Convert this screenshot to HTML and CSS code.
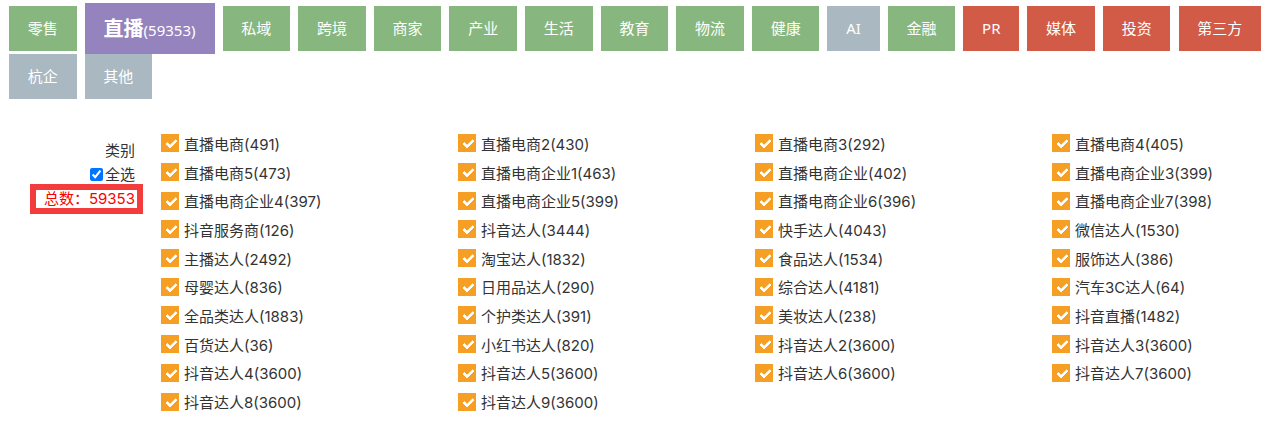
FILE: index.html
```html
<!DOCTYPE html>
<html lang="zh-CN">

<head>
    <meta charset="UTF-8">
    <meta name="viewport" content="width=device-width, initial-scale=1.0">
    <title>类别筛选</title>
    <link rel="stylesheet" href="styles.css">
</head>

<body>
    <nav class="tabs">
        <a class="tab green">零售</a>
        <a class="tab purple active"><b>直播</b>(59353)</a>
        <a class="tab green">私域</a>
        <a class="tab green">跨境</a>
        <a class="tab green">商家</a>
        <a class="tab green">产业</a>
        <a class="tab green">生活</a>
        <a class="tab green">教育</a>
        <a class="tab green">物流</a>
        <a class="tab green">健康</a>
        <a class="tab grey">AI</a>
        <a class="tab green">金融</a>
        <a class="tab red">PR</a>
        <a class="tab red">媒体</a>
        <a class="tab red">投资</a>
        <a class="tab red">第三方</a>
        <a class="tab grey">杭企</a>
        <a class="tab grey">其他</a>
    </nav>

    <main class="filter">
        <div class="filter-label">
            <div>类别</div>
            <label class="check-all"><input type="checkbox" checked>全选</label>
            <div><span class="total">总数：59353</span></div>
        </div>

        <ul class="cat-list">
            <li class="cat"><i class="box"></i>直播电商(491)</li>
            <li class="cat"><i class="box"></i>直播电商2(430)</li>
            <li class="cat"><i class="box"></i>直播电商3(292)</li>
            <li class="cat"><i class="box"></i>直播电商4(405)</li>
            <li class="cat"><i class="box"></i>直播电商5(473)</li>
            <li class="cat"><i class="box"></i>直播电商企业1(463)</li>
            <li class="cat"><i class="box"></i>直播电商企业(402)</li>
            <li class="cat"><i class="box"></i>直播电商企业3(399)</li>
            <li class="cat"><i class="box"></i>直播电商企业4(397)</li>
            <li class="cat"><i class="box"></i>直播电商企业5(399)</li>
            <li class="cat"><i class="box"></i>直播电商企业6(396)</li>
            <li class="cat"><i class="box"></i>直播电商企业7(398)</li>
            <li class="cat"><i class="box"></i>抖音服务商(126)</li>
            <li class="cat"><i class="box"></i>抖音达人(3444)</li>
            <li class="cat"><i class="box"></i>快手达人(4043)</li>
            <li class="cat"><i class="box"></i>微信达人(1530)</li>
            <li class="cat"><i class="box"></i>主播达人(2492)</li>
            <li class="cat"><i class="box"></i>淘宝达人(1832)</li>
            <li class="cat"><i class="box"></i>食品达人(1534)</li>
            <li class="cat"><i class="box"></i>服饰达人(386)</li>
            <li class="cat"><i class="box"></i>母婴达人(836)</li>
            <li class="cat"><i class="box"></i>日用品达人(290)</li>
            <li class="cat"><i class="box"></i>综合达人(4181)</li>
            <li class="cat"><i class="box"></i>汽车3C达人(64)</li>
            <li class="cat"><i class="box"></i>全品类达人(1883)</li>
            <li class="cat"><i class="box"></i>个护类达人(391)</li>
            <li class="cat"><i class="box"></i>美妆达人(238)</li>
            <li class="cat"><i class="box"></i>抖音直播(1482)</li>
            <li class="cat"><i class="box"></i>百货达人(36)</li>
            <li class="cat"><i class="box"></i>小红书达人(820)</li>
            <li class="cat"><i class="box"></i>抖音达人2(3600)</li>
            <li class="cat"><i class="box"></i>抖音达人3(3600)</li>
            <li class="cat"><i class="box"></i>抖音达人4(3600)</li>
            <li class="cat"><i class="box"></i>抖音达人5(3600)</li>
            <li class="cat"><i class="box"></i>抖音达人6(3600)</li>
            <li class="cat"><i class="box"></i>抖音达人7(3600)</li>
            <li class="cat"><i class="box"></i>抖音达人8(3600)</li>
            <li class="cat"><i class="box"></i>抖音达人9(3600)</li>
        </ul>
    </main>
</body>

</html>
```

FILE: styles.css
```css
* {
    margin: 0;
    padding: 0;
    box-sizing: border-box;
}

html {
    overflow: hidden;
}

body {
    font-family: Inter, "Noto Sans CJK SC", sans-serif;
    font-size: 15px;
    color: #333;
    background: #fff;
}

/* top category tabs */
.tabs {
    display: flex;
    flex-wrap: wrap;
    align-items: center;
    column-gap: 8.1px;
    padding: 3px 0 0 9px;
    font-family: "Noto Sans", "Noto Sans CJK SC", sans-serif;
}

.tab {
    display: block;
    height: 45px;
    line-height: 45px;
    padding: 0 18.75px;
    color: #fff;
    font-size: 15px;
    cursor: pointer;
}

.tab.active {
    height: 51px;
    line-height: 51px;
    padding: 0 19px;
}

.tab.active b {
    font-size: 20px;
}

.green {
    background: #87b77e;
}

.purple {
    background: #9583bd;
}

.grey {
    background: #aab8c1;
}

.red {
    background: #d25b48;
}

/* filter area */
.filter {
    display: flex;
    padding-top: 30px;
}

.filter-label {
    width: 135px;
    flex-shrink: 0;
    padding-top: 10px;
    text-align: right;
    line-height: 24px;
}

.check-all {
    display: block;
}

.check-all input {
    vertical-align: -1px;
    margin-right: 2px;
}

.total {
    position: relative;
    color: #f00;
}

/* red highlight frame around the total */
.total::after {
    content: '';
    position: absolute;
    left: -14px;
    right: -8px;
    top: -5px;
    bottom: -6px;
    border: 6px solid #f33c3c;
}

.cat-list {
    list-style: none;
    display: grid;
    grid-template-columns: repeat(3, 297px) auto;
    grid-auto-rows: 28.7px;
    margin-left: 26px;
    flex: 1;
}

.cat {
    display: flex;
    align-items: center;
    white-space: nowrap;
}

.box {
    position: relative;
    width: 18px;
    height: 18px;
    margin-right: 5px;
    background: #f59f24;
    flex-shrink: 0;
}

.box::after {
    content: '';
    position: absolute;
    left: 6.5px;
    top: 3px;
    width: 4px;
    height: 8px;
    border-right: 3px solid #fff;
    border-bottom: 3px solid #fff;
    border-radius: 1px;
    transform: rotate(45deg);
}
```
